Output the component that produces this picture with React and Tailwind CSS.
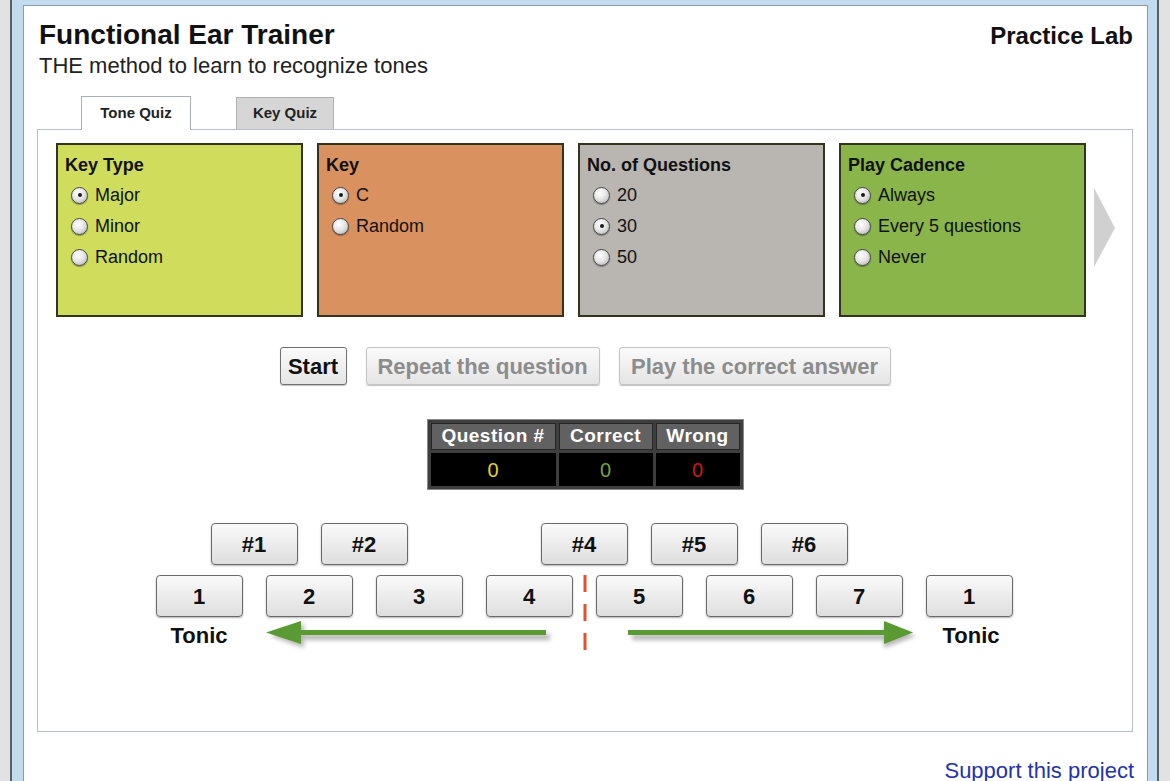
import React from "react";

const font = { fontFamily: '"Liberation Sans", Arial, sans-serif' };

const cards = [
  { title: "Key Type", bg: "bg-[#cfdc5c]", options: ["Major", "Minor", "Random"], checked: 0 },
  { title: "Key", bg: "bg-[#d9915f]", options: ["C", "Random"], checked: 0 },
  { title: "No. of Questions", bg: "bg-[#b9b5b1]", options: ["20", "30", "50"], checked: 1 },
  { title: "Play Cadence", bg: "bg-[#8ab54a]", options: ["Always", "Every 5 questions", "Never"], checked: 0 },
];

function Radio({ checked }) {
  return (
    <span className="relative flex h-[17px] w-[17px] shrink-0 items-center justify-center rounded-full border border-[#4a4a4a] bg-[radial-gradient(circle_at_40%_35%,#ffffff_0%,#e6e6e6_45%,#a9a9a9_100%)] shadow-[0_1px_1px_rgba(0,0,0,0.35)]">
      {checked && <span className="h-[4px] w-[4px] rounded-full bg-[#1a1a1a]" />}
    </span>
  );
}

function OptionCard({ title, bg, options, checked }) {
  return (
    <div className={`h-[174px] w-[247px] border-2 border-[#33331f] ${bg} px-[7px] pt-[9px]`}>
      <div className="text-[18px] font-bold leading-[22px] text-[#111]">{title}</div>
      <div className="mt-[8px] flex flex-col gap-[9px] pl-[6px]">
        {options.map((o, i) => (
          <label key={o} className="flex h-[22px] items-center gap-[7px] text-[18px] leading-[22px] text-[#111]">
            <Radio checked={i === checked} />
            <span>{o}</span>
          </label>
        ))}
      </div>
    </div>
  );
}

function ActionButton({ children, width, muted }) {
  return (
    <button
      className={`h-[38px] ${width} rounded-[3px] border bg-[linear-gradient(#fbfbfb,#e4e4e4)] text-[22px] font-bold shadow-[0_1px_1px_rgba(0,0,0,0.25)] ${
        muted ? "text-[#8c8c8c] border-[#c4c4c4]" : "text-[#111] border-[#707070]"
      }`}
    >
      {children}
    </button>
  );
}

function Key({ label, hidden }) {
  return (
    <div
      className={`flex h-[42px] w-[87px] shrink-0 items-center justify-center rounded-[4px] border border-[#6a6a6a] bg-[linear-gradient(#fafafa,#dedede)] text-[22px] font-bold text-[#111] shadow-[0_1px_2px_rgba(0,0,0,0.3)] ${
        hidden ? "invisible" : ""
      }`}
    >
      {label}
    </div>
  );
}

function Arrow({ dir }) {
  // green arrow with a soft grey shadow under it
  const left = dir === "left";
  return (
    <svg width="290" height="36" viewBox="0 0 290 36" className="shrink-0">
      <defs>
        <filter id={`sh-${dir}`} x="-10%" y="-50%" width="120%" height="200%">
          <feGaussianBlur stdDeviation="2" />
        </filter>
      </defs>
      {left ? (
        <>
          <g filter={`url(#sh-${dir})`} fill="#9a9a9a" opacity="0.7">
            <rect x="38" y="16" width="248" height="6" />
            <polygon points="6,18 40,6 40,30" />
          </g>
          <rect x="34" y="12" width="248" height="5" fill="#5a9a32" />
          <polygon points="2,14.5 37,3 37,26" fill="#5a9a32" />
        </>
      ) : (
        <>
          <g filter={`url(#sh-${dir})`} fill="#9a9a9a" opacity="0.7">
            <rect x="6" y="16" width="256" height="6" />
            <polygon points="290,18 258,6 258,30" />
          </g>
          <rect x="2" y="12" width="258" height="5" fill="#5a9a32" />
          <polygon points="287,14.5 258,3 258,26" fill="#5a9a32" />
        </>
      )}
    </svg>
  );
}

export default function App() {
  return (
    <div className="flex h-[781px] w-[1170px] overflow-hidden bg-[#e2e2e2] pl-[10px] pr-[11px]" style={font}>
      <div className="flex flex-1 flex-col border-x-2 border-[#55606b] bg-[#c3dbef] pl-[11px] pr-[9px] pt-[5px]">
        <div className="flex flex-1 flex-col border border-b-0 border-[#8b9bab] bg-white">
          <header className="flex justify-between pl-[15px] pr-[14px] pt-[13px]">
            <div>
              <h1 className="text-[28px] font-bold leading-[32px] text-[#111]">Functional Ear Trainer</h1>
              <p className="mt-[2px] text-[22px] leading-[25px] text-[#222]">THE method to learn to recognize tones</p>
            </div>
            <div className="pt-[2px] text-[24px] font-bold leading-[30px] text-[#111]">Practice Lab</div>
          </header>

          <div className="pl-[13px] pr-[14px] pt-[18px]">
            <div className="flex items-end pl-[44px]">
              <div className="relative z-10 -mb-px flex h-[34px] w-[110px] items-center justify-center border border-b-0 border-[#a8b0b8] bg-white text-[15px] font-bold text-[#222]">
                Tone Quiz
              </div>
              <div className="ml-[45px] flex h-[32px] w-[98px] items-center justify-center border border-b-0 border-[#b0b0b0] bg-[#d6d6d6] text-[15px] font-bold text-[#222]">
                Key Quiz
              </div>
            </div>

            <section className="h-[603px] border border-[#b4c0cc] bg-white">
              <div className="flex items-start pl-[18px] pt-[13px]">
                <div className="flex gap-[14px]">
                  {cards.map((c) => (
                    <OptionCard key={c.title} {...c} />
                  ))}
                </div>
                <svg width="22" height="80" viewBox="0 0 22 80" className="ml-[8px] mt-[45px]">
                  <polygon points="0,0 21,40 0,79" fill="#d0d0d0" />
                </svg>
              </div>

              <div className="mt-[30px] flex justify-center gap-[19px]">
                <ActionButton width="w-[67px]">Start</ActionButton>
                <ActionButton width="w-[234px]" muted>
                  Repeat the question
                </ActionButton>
                <ActionButton width="w-[272px]" muted>
                  Play the correct answer
                </ActionButton>
              </div>

              <div className="mt-[34px] flex justify-center">
                <div className="border border-[#8a8a8a] bg-[#3e3e3e] p-[3px]">
                  <div className="grid grid-cols-[125px_94px_84px] gap-[3px]">
                    {["Question #", "Correct", "Wrong"].map((h) => (
                      <div
                        key={h}
                        className="flex h-[27px] items-center justify-center border border-[#262626] bg-[#616161] text-[19px] font-bold tracking-[0.5px] text-white"
                      >
                        {h}
                      </div>
                    ))}
                    {[
                      ["0", "text-[#e2d424]"],
                      ["0", "text-[#76a23a]"],
                      ["0", "text-[#d41414]"],
                    ].map(([v, color], i) => (
                      <div
                        key={i}
                        className={`flex h-[33px] items-center justify-center bg-black text-[20px] ${color}`}
                      >
                        {v}
                      </div>
                    ))}
                  </div>
                </div>
              </div>

              <div className="relative mx-auto mt-[33px] w-[859px]">
                <div className="flex gap-[23px] pl-[55px]">
                  <Key label="#1" />
                  <Key label="#2" />
                  <Key label="#3" hidden />
                  <Key label="#4" />
                  <Key label="#5" />
                  <Key label="#6" />
                </div>
                <div className="mt-[10px] flex gap-[23px]">
                  {["1", "2", "3", "4", "5", "6", "7", "1"].map((k, i) => (
                    <Key key={i} label={k} />
                  ))}
                </div>
                <div className="flex items-start">
                  <div className="w-[87px] pt-[5px] text-center text-[22px] font-bold leading-[28px] text-[#111]">Tonic</div>
                  <div className="ml-[21px] mt-[1px]">
                    <Arrow dir="left" />
                  </div>
                  <div className="ml-[72px] mt-[1px]">
                    <Arrow dir="right" />
                  </div>
                  <div className="ml-auto w-[87px] pt-[5px] text-center text-[22px] font-bold leading-[28px] text-[#111]">Tonic</div>
                </div>
                <svg width="4" height="78" className="absolute left-[427px] top-[52px]">
                  <line x1="2" y1="0" x2="2" y2="78" stroke="#e0522c" strokeWidth="3" strokeDasharray="17 12" />
                </svg>
              </div>
            </section>
          </div>

          <footer className="flex justify-end pr-[13px] pt-[26px]">
            <a className="text-[22px] leading-[26px] text-[#2233aa]">Support this project</a>
          </footer>
        </div>
      </div>
    </div>
  );
}
